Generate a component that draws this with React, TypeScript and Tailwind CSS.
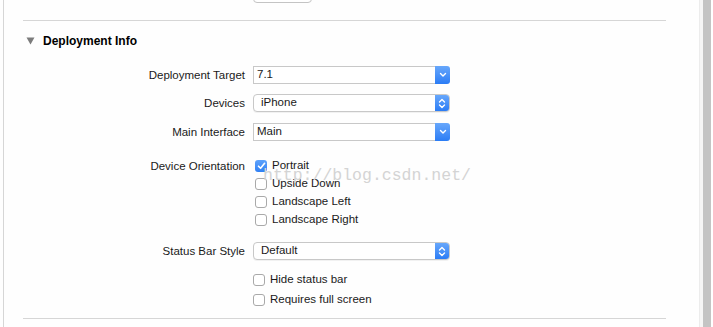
const FONT = '"Liberation Sans", "Helvetica Neue", Arial, sans-serif'

function Chevron({ double }: { double?: boolean }) {
  if (double) {
    return (
      <svg width="8" height="11" viewBox="0 0 8 11" fill="none" stroke="white" strokeWidth="1.4" strokeLinecap="round" strokeLinejoin="round">
        <path d="M1.5 4 L4 1.5 L6.5 4" />
        <path d="M1.5 7 L4 9.5 L6.5 7" />
      </svg>
    )
  }
  return (
    <svg width="8" height="6" viewBox="0 0 8 6" fill="none" stroke="white" strokeWidth="1.4" strokeLinecap="round" strokeLinejoin="round">
      <path d="M1.5 1.5 L4 4 L6.5 1.5" />
    </svg>
  )
}

function ComboBox({ value }: { value: string }) {
  return (
    <div className="flex h-[18px] w-[197px]">
      <div className="flex-1 flex items-center pl-[3px] border border-[#c8c8c8] border-r-0 bg-white text-[11.5px] text-[#1a1a1a]">
        {value}
      </div>
      <div className="w-[15px] flex items-center justify-center rounded-r-[3px] bg-gradient-to-b from-[#67a7fb] to-[#2a7cf5]">
        <Chevron />
      </div>
    </div>
  )
}

function PopUp({ value }: { value: string }) {
  return (
    <div className="flex h-[18px] w-[197px] rounded-[4px] border border-[#c8c8c8] bg-white overflow-hidden shadow-[0_1px_0_rgba(0,0,0,0.05)]">
      <div className="flex-1 flex items-center pl-[7px] text-[11.5px] text-[#1a1a1a]">{value}</div>
      <div className="w-[14px] flex items-center justify-center bg-gradient-to-b from-[#67a7fb] to-[#2a7cf5]">
        <Chevron double />
      </div>
    </div>
  )
}

function Check({ label, checked }: { label: string; checked?: boolean }) {
  return (
    <div className="flex items-center h-[18px] gap-[5px]">
      {checked ? (
        <div className="w-[12px] h-[12px] rounded-[3px] bg-gradient-to-b from-[#5ea2fb] to-[#2f80f5] flex items-center justify-center">
          <svg width="9" height="8" viewBox="0 0 9 8" fill="none" stroke="white" strokeWidth="1.6" strokeLinecap="round" strokeLinejoin="round">
            <path d="M1.5 4.2 L3.6 6.3 L7.6 1.3" />
          </svg>
        </div>
      ) : (
        <div className="w-[12px] h-[12px] rounded-[3px] border border-[#a9a9a9] bg-white" />
      )}
      <span className="text-[11.5px] text-[#1a1a1a]">{label}</span>
    </div>
  )
}

function Row({ label, children, className }: { label?: string; children: React.ReactNode; className?: string }) {
  return (
    <div className={`grid grid-cols-[241px_1fr] gap-x-[8px] items-start ${className ?? ''}`}>
      <div className="text-right text-[11.5px] text-[#1a1a1a] leading-[18px]">{label}</div>
      <div>{children}</div>
    </div>
  )
}

export default function App() {
  return (
    <div className="w-[713px] h-[327px] bg-[#fefefe] flex overflow-hidden relative" style={{ fontFamily: FONT }}>
      <div className="w-[3px]" />
      <div className="w-px bg-[#d6d6d6]" />
      <div className="flex-1 flex flex-col">
        <div className="ml-[249px] -mt-[16px] w-[59px] h-[19px] rounded-[4px] border border-[#c4c4c4] bg-white" />
        <div className="ml-[19px] w-[643px] h-px bg-[#d6d6d6] mt-[17px]" />

        <div className="flex items-center h-[18px] mt-[11px] ml-[22px] gap-[8px]">
          <svg width="9" height="8" viewBox="0 0 9 8">
            <path d="M0.5 0.5 H8.5 L4.5 7.5 Z" fill="#7c7c7c" />
          </svg>
          <span className="text-[12px] font-bold text-black">Deployment Info</span>
        </div>

        <Row label="Deployment Target" className="mt-[16px]">
          <ComboBox value="7.1" />
        </Row>
        <Row label="Devices" className="mt-[10px]">
          <PopUp value="iPhone" />
        </Row>
        <Row label="Main Interface" className="mt-[11px]">
          <ComboBox value="Main" />
        </Row>
        <Row label="Device Orientation" className="mt-[16px]">
          <div className="flex flex-col pl-[2px]">
            <Check label="Portrait" checked />
            <Check label="Upside Down" />
            <Check label="Landscape Left" />
            <Check label="Landscape Right" />
          </div>
        </Row>
        <Row label="Status Bar Style" className="mt-[13px]">
          <PopUp value="Default" />
        </Row>
        <Row className="mt-[11px]">
          <div className="flex flex-col gap-[2px]">
            <Check label="Hide status bar" />
            <Check label="Requires full screen" />
          </div>
        </Row>
        <div className="ml-[19px] w-[643px] h-px bg-[#d6d6d6] mt-[9px]" />
      </div>
      <div className="w-px bg-[#ececec]" />
      <div className="w-[3px] bg-[#f6f6f6]" />
      <div className="w-[8px] bg-[#c4c4c4]" />
      <div className="w-[2px] bg-white" />

      <div
        className="absolute left-[263px] top-[164px] text-[16.5px] text-[#d4d4d4] leading-[24px] pointer-events-none"
        style={{ fontFamily: '"Liberation Mono", "DejaVu Sans Mono", monospace' }}
      >
        http://blog.csdn.net/
      </div>
    </div>
  )
}
